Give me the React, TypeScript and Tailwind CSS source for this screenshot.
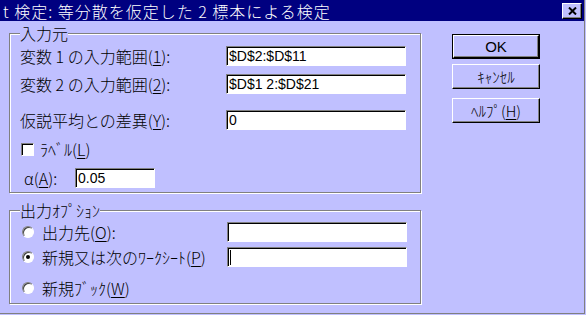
import type { ReactNode } from "react";

function Field({ value = "", width, caret = false }: { value?: string; width: string; caret?: boolean }) {
  return (
    <div
      className={`h-[20px] ${width} shrink-0 bg-white border border-t-[#808080] border-l-[#808080] border-b-white border-r-white shadow-[inset_1px_1px_0_#000] flex items-center pl-[2px] font-['Liberation_Sans',sans-serif] font-normal text-[14px] leading-[16px]`}
    >
      {caret && <span className="w-px h-[15px] bg-black" />}
      {value}
    </div>
  );
}

function Group({ title, children, className = "" }: { title: string; children: ReactNode; className?: string }) {
  return (
    <div
      className={`flex flex-col border border-[#808080] shadow-[inset_1px_1px_0_#fff,1px_1px_0_#fff] pl-[10px] ${className}`}
    >
      <span className="-mt-[10px] self-start bg-[#c0c0ff] leading-[18px]">{title}</span>
      {children}
    </div>
  );
}

function Radio({ checked = false }: { checked?: boolean }) {
  return (
    <span className="w-[12px] h-[12px] shrink-0 rounded-full bg-white border border-t-[#808080] border-l-[#808080] border-b-white border-r-white shadow-[inset_1px_1px_0_#404040] flex items-center justify-center">
      {checked && <span className="w-[4px] h-[4px] rounded-full bg-black" />}
    </span>
  );
}

function Btn({ children, isDefault = false }: { children: ReactNode; isDefault?: boolean }) {
  return (
    <button className={`w-[88px] h-[25px] shrink-0 ${isDefault ? "border border-black" : ""}`}>
      <span className="h-full w-full border border-t-white border-l-white border-r-black border-b-black shadow-[inset_-1px_-1px_0_#808080] flex items-center justify-center text-[15px] leading-[16px]">
        {children}
      </span>
    </button>
  );
}

const U = ({ c }: { c: string }) => <span className="underline underline-offset-2">{c}</span>;

export default function App() {
  return (
    <div className="w-[586px] h-[315px] bg-[#c0c0ff] text-black text-[16px] leading-[18px] font-light font-['Noto_Sans_CJK_JP',sans-serif] overflow-hidden">
      <div className="w-[585px] h-[314px] border-r border-b border-[#808080] flex flex-col">
        {/* title bar */}
        <div className="h-[21px] shrink-0 bg-[#000080] flex items-center justify-between pl-[3px] pr-[2px] text-white">
          <span className="leading-[20px] tracking-[1px] whitespace-nowrap">t 検定: 等分散を仮定した 2 標本による検定</span>
          <span className="w-[20px] h-[16px] bg-[#c0c0ff] border border-t-white border-l-white border-r-black border-b-black shadow-[inset_-1px_-1px_0_#808080] flex items-center justify-center">
            <svg width="9" height="8" viewBox="0 0 9 8">
              <path d="M1 0.5 L8 7.5 M8 0.5 L1 7.5" stroke="#000" strokeWidth="2" />
            </svg>
          </span>
        </div>

        <div className="flex pl-[9px] pt-[12px]">
          <div className="flex flex-col w-[412px]">
            <Group title="入力元" className="pb-[4px]">
              <div className="flex items-center h-[20px] mt-[4px]">
                <span className="w-[206px] shrink-0">変数 1 の入力範囲(<U c="1" />):</span>
                <Field value="$D$2:$D$11" width="w-[180px]" />
              </div>
              <div className="flex items-center h-[20px] mt-[8px]">
                <span className="w-[206px] shrink-0">変数 2 の入力範囲(<U c="2" />):</span>
                <Field value="$D$1 2:$D$21" width="w-[180px]" />
              </div>
              <div className="flex items-center h-[20px] mt-[16px]">
                <span className="w-[206px] shrink-0">仮説平均との差異(<U c="Y" />):</span>
                <Field value="0" width="w-[180px]" />
              </div>
              <div className="flex items-center h-[20px] mt-[9px] pl-[1px]">
                <span className="w-[13px] h-[13px] bg-white border border-t-[#808080] border-l-[#808080] border-b-white border-r-white shadow-[inset_1px_1px_0_#000]" />
                <span className="ml-[6px]">ﾗﾍﾞﾙ(<U c="L" />)</span>
              </div>
              <div className="flex items-center h-[20px] mt-[9px] pl-[4px]">
                <span className="w-[51px] shrink-0">α(<U c="A" />):</span>
                <Field value="0.05" width="w-[80px]" />
              </div>
            </Group>

            <Group title="出力ｵﾌﾟｼｮﾝ" className="mt-[17px] pb-[5px]">
              <div className="flex items-center h-[20px] mt-[3px] pl-[2px]">
                <Radio />
                <span className="ml-[8px] w-[185px] shrink-0">出力先(<U c="O" />):</span>
                <Field width="w-[180px]" />
              </div>
              <div className="flex items-center h-[20px] mt-[5px] pl-[2px]">
                <Radio checked />
                <span className="ml-[8px] w-[185px] shrink-0">新規又は次のﾜｰｸｼｰﾄ(<U c="P" />)</span>
                <Field width="w-[180px]" caret />
              </div>
              <div className="flex items-center h-[20px] mt-[11px] pl-[2px]">
                <Radio />
                <span className="ml-[8px]">新規ﾌﾞｯｸ(<U c="W" />)</span>
              </div>
            </Group>
          </div>

          <div className="ml-[31px] pt-[1px] flex flex-col">
            <Btn isDefault>
              <span className="font-['Liberation_Sans',sans-serif] font-normal">OK</span>
            </Btn>
            <div className="mt-[5px]">
              <Btn>ｷｬﾝｾﾙ</Btn>
            </div>
            <div className="mt-[9px]">
              <Btn>
                ﾍﾙﾌﾟ(<U c="H" />)
              </Btn>
            </div>
          </div>
        </div>
      </div>
    </div>
  );
}
